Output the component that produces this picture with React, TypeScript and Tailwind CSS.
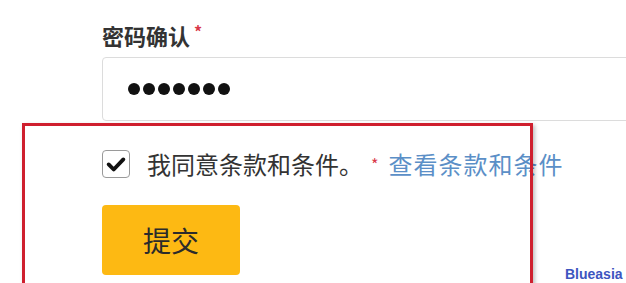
export default function App() {
  return (
    <div className="relative w-[626px] h-[283px] overflow-hidden bg-white font-['Noto_Sans_CJK_SC','Noto_Sans',sans-serif]">
      <div className="pl-[102px] pt-[18px]">
        <div className="flex items-start h-[34px]">
          <span className="text-[22px] leading-[34px] font-bold text-[#333]">密码确认</span>
          <span className="ml-[4px] text-[16px] leading-[26px] font-bold text-[#d9384a]">*</span>
        </div>
        <div className="mt-[5px] w-[560px] h-[64px] rounded-[4px] border border-[#dcdcdc] flex items-center pl-[25px] gap-[3px]">
          {[0, 1, 2, 3, 4, 5, 6].map((i) => (
            <span key={i} className="w-[12px] h-[12px] rounded-full bg-[#111]" />
          ))}
        </div>
      </div>

      <div className="relative ml-[22px] mt-[2px] w-[511px] h-[200px] pl-[80px] pt-[27px]">
        {/* annotation frame drawn over the content */}
        <div className="pointer-events-none absolute inset-0 z-10 border-[3px] border-[#cf1f2e] shadow-[2px_2px_4px_rgba(0,0,0,0.25)]" />
        <div className="flex items-center h-[28px] whitespace-nowrap">
          <span className="shrink-0 w-[28px] h-[28px] rounded-[4px] border-[1.5px] border-[#9a9a9a] flex items-center justify-center bg-white">
            <svg width="22" height="22" viewBox="0 0 24 24">
              <polyline points="4,12.5 9.5,18 20,7" fill="none" stroke="#111" strokeWidth="4.2" strokeLinecap="round" strokeLinejoin="round" />
            </svg>
          </span>
          <span className="shrink-0 ml-[17px] text-[24px] leading-[28px] text-[#333]">我同意条款和条件。</span>
          <span className="shrink-0 ml-[8px] text-[16px] leading-[28px] text-[#d9384a]">*</span>
          <span className="shrink-0 ml-[10px] text-[24px] leading-[28px] tracking-[1px] text-[#5b8fc7]">查看条款和条件</span>
        </div>
        <button className="mt-[27px] w-[138px] h-[70px] rounded-[4px] bg-[#fdb913] text-[28px] text-[#2b2b2b] flex items-center justify-center">
          提交
        </button>
      </div>

      <div className="absolute left-[565px] top-[266px] text-[14px] leading-[16px] font-bold text-[#3d55bf] font-['Liberation_Sans',sans-serif]">
        Blueasia
      </div>
    </div>
  );
}
